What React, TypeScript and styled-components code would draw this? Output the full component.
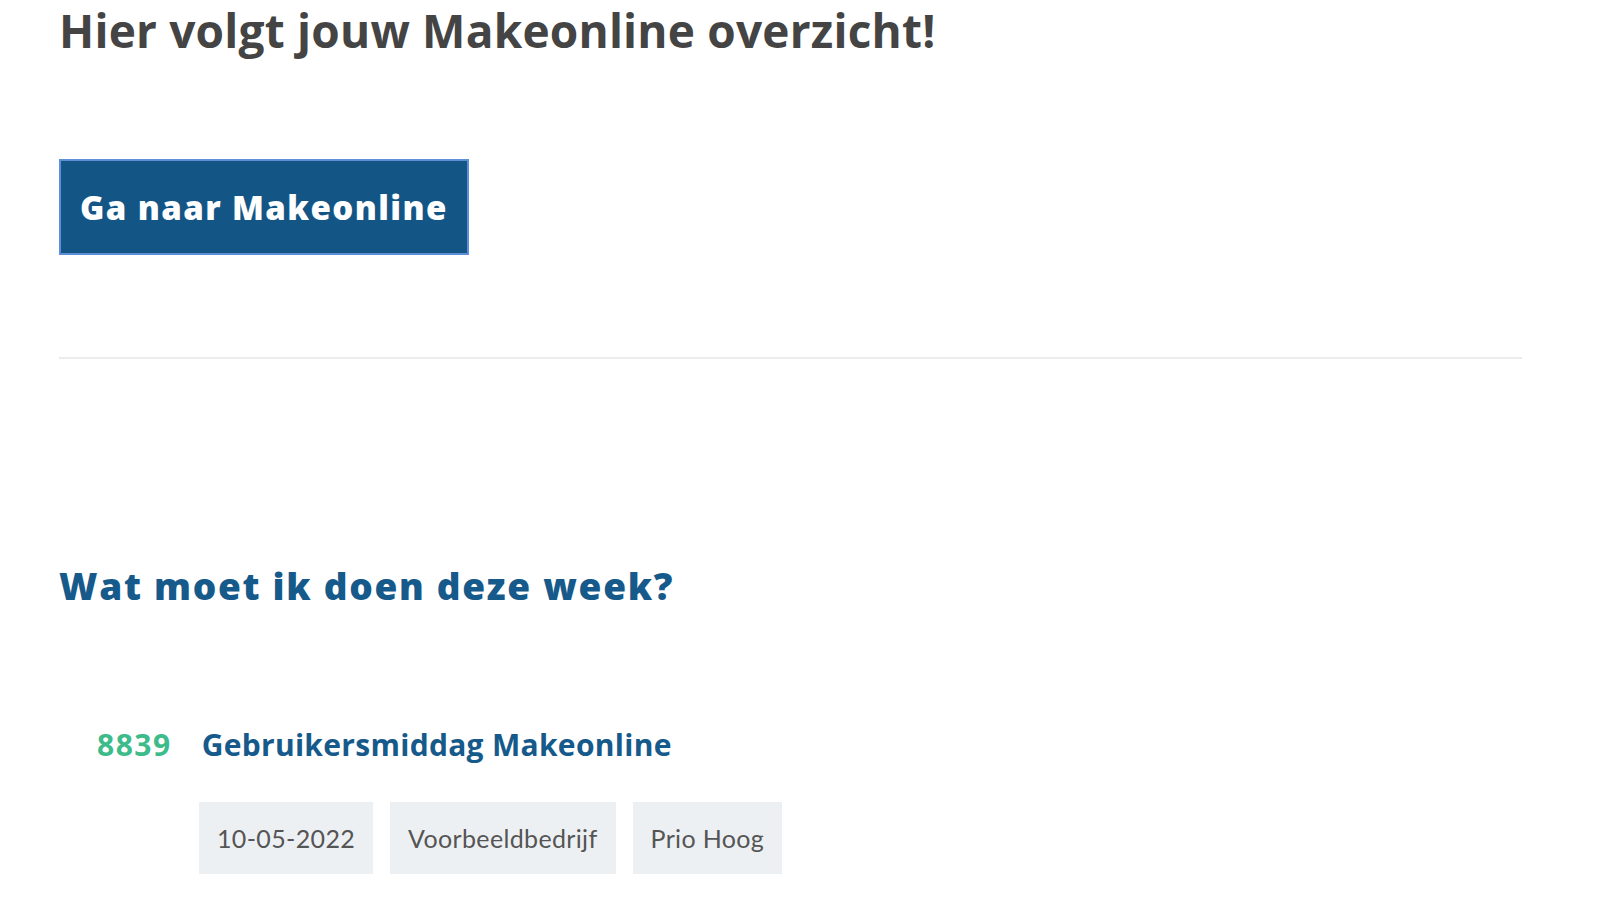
import styled, { createGlobalStyle } from 'styled-components'

const GlobalStyle = createGlobalStyle`
  html, body {
    margin: 0;
    padding: 0;
    background: #ffffff;
  }
  body {
    font-family: 'Open Sans', Lato, 'Liberation Sans', sans-serif;
  }
`

interface Task {
  id: number
  title: string
  tags: string[]
}

const tasks: Task[] = [
  {
    id: 8839,
    title: 'Gebruikersmiddag Makeonline',
    tags: ['10-05-2022', 'Voorbeeldbedrijf', 'Prio Hoog'],
  },
]

const App = () => {
  return (
    <>
      <GlobalStyle />
      <Page>
        <Title>Hier volgt jouw Makeonline overzicht!</Title>
        <PrimaryButton type='button'>Ga naar Makeonline</PrimaryButton>
        <Divider />
        <SectionTitle>Wat moet ik doen deze week?</SectionTitle>
        <TaskList>
          {tasks.map((task) => (
            <TaskItem key={task.id}>
              <TaskHeader>
                <TaskNumber>{task.id}</TaskNumber>
                <TaskTitle href='#'>{task.title}</TaskTitle>
              </TaskHeader>
              <TagRow>
                {task.tags.map((tag) => (
                  <Tag key={tag}>{tag}</Tag>
                ))}
              </TagRow>
            </TaskItem>
          ))}
        </TaskList>
      </Page>
    </>
  )
}

export default App

const Page = styled.main`
  display: flex;
  flex-direction: column;
  align-items: flex-start;
  padding: 2px 78px 0 59px;
`

const Title = styled.h1`
  margin: 0;
  font-size: 46px;
  line-height: 56px;
  font-weight: 700;
  color: #444444;
  letter-spacing: 0.2px;
`

const PrimaryButton = styled.button`
  margin-top: 101px;
  height: 96px;
  padding: 0 19px;
  display: inline-flex;
  align-items: center;
  background: #135686;
  border: 2px solid #5f8ed8;
  color: #ffffff;
  font-family: inherit;
  font-size: 33px;
  font-weight: 800;
  letter-spacing: 1.4px;
  cursor: pointer;
`

const Divider = styled.hr`
  align-self: stretch;
  margin: 102px 0 0;
  border: 0;
  height: 2px;
  background: #ececec;
`

const SectionTitle = styled.h2`
  margin: 205px 0 0;
  font-size: 37px;
  line-height: 44px;
  font-weight: 800;
  color: #155a8a;
  letter-spacing: 1.7px;
`

const TaskList = styled.ul`
  list-style: none;
  margin: 119px 0 0;
  padding: 0 0 0 38px;
`

const TaskItem = styled.li`
  display: flex;
  flex-direction: column;
`

const TaskHeader = styled.div`
  display: flex;
  align-items: baseline;
  gap: 30px;
`

const TaskNumber = styled.span`
  font-size: 30px;
  line-height: 36px;
  font-weight: 700;
  color: #3dbb8a;
  letter-spacing: 1.5px;
`

const TaskTitle = styled.a`
  font-size: 30px;
  line-height: 36px;
  font-weight: 700;
  color: #155a8a;
  text-decoration: none;
  letter-spacing: 0.3px;
`

const TagRow = styled.div`
  display: flex;
  gap: 17px;
  margin: 39px 0 0 102px;
`

const Tag = styled.span`
  display: inline-flex;
  align-items: center;
  height: 72px;
  padding: 0 18px;
  background: #edf0f3;
  color: #555555;
  font-family: Lato, 'Open Sans', sans-serif;
  font-size: 25px;
  font-weight: 400;
  letter-spacing: 0.35px;
`
